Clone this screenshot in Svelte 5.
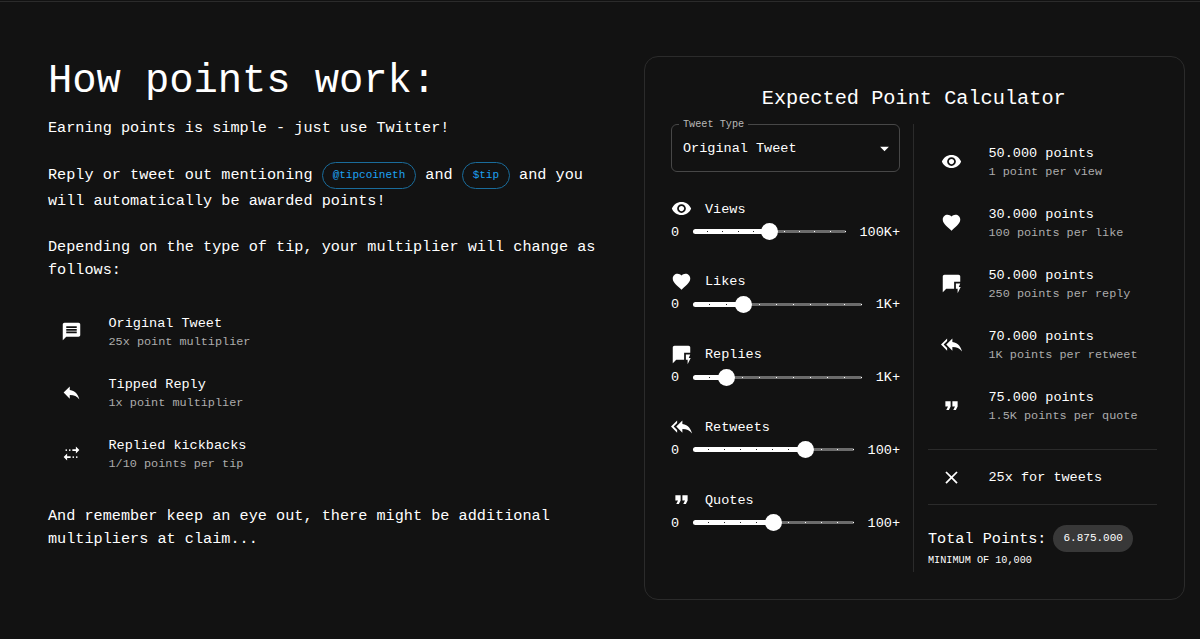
<script>
	const icons = {
		message: 'M20 2H4c-1.1 0-1.99.9-1.99 2L2 22l4-4h14c1.1 0 2-.9 2-2V4c0-1.1-.9-2-2-2zm-2 12H6v-2h12v2zm0-3H6V9h12v2zm0-3H6V6h12v2z',
		reply: 'M10 9V5l-7 7 7 7v-4.1c5 0 8.5 1.6 11 5.1-1-5-4-10-11-11z',
		replyAll: 'M7 8V5l-7 7 7 7v-3l-4-4 4-4V8zm6 1V5l-7 7 7 7v-4.1c5 0 8.5 1.6 11 5.1-1-5-4-10-11-11z',
		stop: 'M17 4l4 4-4 4V9h-4V7h4V4zM10 7a1 1 0 1 1 0 2 1 1 0 0 1 0-2zM6 7a1 1 0 1 1 0 2 1 1 0 0 1 0-2zM7 20l-4-4 4-4v3h4v2H7v3zM14 17a1 1 0 1 1 0-2 1 1 0 0 1 0 2zM18 17a1 1 0 1 1 0-2 1 1 0 0 1 0 2z',
		eye: 'M12 4.5C7 4.5 2.73 7.61 1 12c1.73 4.39 6 7.5 11 7.5s9.27-3.11 11-7.5c-1.73-4.39-6-7.5-11-7.5zM12 17c-2.76 0-5-2.24-5-5s2.24-5 5-5 5 2.24 5 5-2.24 5-5 5zm0-8c-1.66 0-3 1.34-3 3s1.34 3 3 3 3-1.34 3-3-1.34-3-3-3z',
		heart: 'M12 21.35l-1.45-1.32C5.4 15.36 2 12.28 2 8.5 2 5.42 4.42 3 7.5 3c1.74 0 3.41.81 4.5 2.09C13.09 3.81 14.76 3 16.5 3 19.58 3 22 5.42 22 8.5c0 3.78-3.4 6.86-8.55 11.54L12 21.35z',
		quick: 'M22 4c0-1.1-.9-2-2-2H4c-1.1 0-1.99.9-1.99 2L2 22l4-4h9v-8h7V4zM22.5 16h-2.2l1.7-4h-5v6h2v5l3.5-7z',
		quote: 'M6 17h3l2-4V7H5v6h3l-2 4zm8 0h3l2-4V7h-6v6h3l-2 4z',
		close: 'M19 6.41L17.59 5 12 10.59 6.41 5 5 6.41 10.59 12 5 17.59 6.41 19 12 13.41 17.59 19 19 17.59 13.41 12 19 6.41z'
	};

	const multipliers = [
		{ icon: 'message', title: 'Original Tweet', sub: '25x point multiplier' },
		{ icon: 'reply', title: 'Tipped Reply', sub: '1x point multiplier' },
		{ icon: 'stop', title: 'Replied kickbacks', sub: '1/10 points per tip' }
	];

	let sliders = [
		{ icon: 'eye', name: 'Views', value: 50, max: '100K+' },
		{ icon: 'heart', name: 'Likes', value: 30, max: '1K+' },
		{ icon: 'quick', name: 'Replies', value: 20, max: '1K+' },
		{ icon: 'replyAll', name: 'Retweets', value: 70, max: '100+' },
		{ icon: 'quote', name: 'Quotes', value: 50, max: '100+' }
	];

	const results = [
		{ icon: 'eye', title: '50.000 points', sub: '1 point per view' },
		{ icon: 'heart', title: '30.000 points', sub: '100 points per like' },
		{ icon: 'quick', title: '50.000 points', sub: '250 points per reply' },
		{ icon: 'replyAll', title: '70.000 points', sub: '1K points per retweet' },
		{ icon: 'quote', title: '75.000 points', sub: '1.5K points per quote' }
	];

	const marks = [10, 20, 30, 40, 50, 60, 70, 80, 90, 100];
</script>

{#snippet icon(name)}
	<svg class="icon" viewBox="0 0 24 24"><path d={icons[name]} /></svg>
{/snippet}

{#snippet row(item)}
	<li>
		{@render icon(item.icon)}
		<div>
			<p class="primary">{item.title}</p>
			<p class="secondary">{item.sub}</p>
		</div>
	</li>
{/snippet}

<main>
	<section class="info">
		<h1>How points work:</h1>
		<p>Earning points is simple - just use Twitter!</p>
		<p class="mention">
			Reply or tweet out mentioning <span class="chip">@tipcoineth</span> and <span class="chip">$tip</span> and you<br />
			will automatically be awarded points!
		</p>
		<p>Depending on the type of tip, your multiplier will change as follows:</p>
		<ul>
			{#each multipliers as item}
				{@render row(item)}
			{/each}
		</ul>
		<p>And remember keep an eye out, there might be additional multipliers at claim...</p>
	</section>

	<section class="card">
		<h2>Expected Point Calculator</h2>
		<div class="columns">
			<div class="inputs">
				<fieldset>
					<legend>Tweet Type</legend>
					<span>Original Tweet</span>
					<svg class="icon" viewBox="0 0 24 24"><path d="M7 10l5 5 5-5z" /></svg>
				</fieldset>
				{#each sliders as s}
					<div class="field">
						<div class="name">{@render icon(s.icon)}<span>{s.name}</span></div>
						<div class="range">
							<span>0</span>
							<div class="slider">
								<div class="track" style="width: {s.value}%"></div>
								{#each marks as m}
									<i class:active={m <= s.value} style="left: {m}%"></i>
								{/each}
								<div class="thumb" style="left: {s.value}%"></div>
							</div>
							<span>{s.max}</span>
						</div>
					</div>
				{/each}
			</div>

			<div class="results">
				<ul>
					{#each results as item}
						{@render row(item)}
					{/each}
				</ul>
				<div class="times">
					{@render icon('close')}
					<p class="primary">25x for tweets</p>
				</div>
				<div class="total"><span>Total Points:</span><span class="badge">6.875.000</span></div>
				<p class="minimum">MINIMUM OF 10,000</p>
			</div>
		</div>
	</section>
</main>

<style>
	:global(body) {
		background: #121212;
	}

	main {
		box-sizing: border-box;
		width: 1200px;
		height: 639px;
		display: flex;
		align-items: flex-start;
		padding: 55px 15px 0 48px;
		border-top: 1px solid #121212;
		box-shadow: inset 0 1px #2b2b2b;
		color: #fff;
		font-family: 'Liberation Mono', monospace;
		overflow: hidden;
	}

	h1, h2, p, ul {
		margin: 0;
		padding: 0;
		font-weight: 400;
	}

	.icon {
		width: 21px;
		height: 21px;
		flex: none;
		fill: #fff;
	}

	.info {
		width: 550px;
		margin-right: 45.5px;
		padding-top: 1px;
	}

	h1 {
		font-size: 40.5px;
		line-height: 48px;
		letter-spacing: -0.05px;
		margin-bottom: 12px;
	}

	.info > p {
		font-size: 15.2px;
		line-height: 22.8px;
		letter-spacing: 0.01px;
		margin-bottom: 22px;
	}

	.info > .mention {
		line-height: 26px;
		margin: -1px 0 22px;
	}

	.chip {
		position: relative;
		top: 1px;
		display: inline-flex;
		align-items: center;
		box-sizing: border-box;
		height: 27px;
		padding: 0 9.9px;
		border: 1px solid #1a6c9b;
		border-radius: 14px;
		font-size: 11px;
		letter-spacing: 0;
		color: #1da1f2;
		vertical-align: middle;
	}

	li {
		display: flex;
		align-items: center;
		height: 61px;
		padding-left: 13px;
	}

	li > .icon {
		margin-bottom: 4px;
	}

	li > div {
		margin: 0 0 2px 26.5px;
	}

	.primary {
		font-size: 13.53px;
		line-height: 20px;
	}

	.secondary {
		font-size: 11.84px;
		line-height: 17px;
		color: #acacac;
	}

	.info ul {
		margin: 19px 0;
	}

	.card {
		box-sizing: border-box;
		width: 541px;
		height: 544px;
		border: 1px solid #2b2b2b;
		border-radius: 14px;
		padding: 28px 27px 0 26.5px;
	}

	h2 {
		font-size: 20.27px;
		line-height: 28px;
		text-align: center;
		margin-bottom: 11px;
	}

	.columns {
		display: flex;
	}

	.inputs {
		width: 229px;
		padding-right: 13px;
	}

	fieldset {
		box-sizing: border-box;
		display: flex;
		align-items: center;
		justify-content: space-between;
		width: 229px;
		height: 53px;
		margin: -5px 0 26px;
		padding: 0 4px 5px 11px;
		border: 1px solid #474747;
		border-radius: 6px;
		font-size: 13.53px;
	}

	legend {
		margin-left: -4px;
		padding: 1px 4px 0;
		font-size: 10.2px;
		line-height: 10px;
		color: #b8b8b8;
	}

	.field {
		height: 72.75px;
		font-size: 13.53px;
	}

	.name {
		display: flex;
		align-items: center;
		gap: 13px;
		height: 22px;
	}

	.name .icon {
		margin-bottom: 1px;
	}

	.range {
		display: flex;
		align-items: center;
		height: 24px;
	}

	.slider {
		position: relative;
		flex: 1;
		height: 3px;
		margin: 0 13.5px 1px 13.5px;
		border-radius: 2px;
		background: #6b6b6b;
	}

	.track {
		position: relative;
		top: -1px;
		height: 5px;
		border-radius: 3px;
		background: #fff;
	}

	i {
		position: absolute;
		top: 1px;
		width: 1px;
		height: 1px;
		margin-left: -1px;
		background: #fff;
	}

	i.active {
		background: #222;
	}

	.thumb {
		position: absolute;
		top: -7px;
		width: 17px;
		height: 17px;
		margin-left: -8.5px;
		border-radius: 50%;
		background: #fff;
	}

	.results {
		box-sizing: border-box;
		width: 244px;
		height: 448px;
		padding: 9px 0 0 14px;
		border-left: 1px solid #2b2b2b;
	}

	.times {
		display: flex;
		align-items: center;
		gap: 26.5px;
		height: 54px;
		margin-top: 11px;
		padding-left: 13px;
		border: solid #2b2b2b;
		border-width: 1px 0;
	}

	.times .primary {
		padding-top: 1px;
	}

	.total {
		display: flex;
		align-items: center;
		margin-top: 20px;
		font-size: 15.2px;
	}

	.badge {
		height: 27px;
		margin-left: 7px;
		padding: 0 10px;
		border-radius: 14px;
		background: #383838;
		font-size: 11px;
		line-height: 27px;
	}

	.minimum {
		font-size: 10.2px;
		line-height: 17px;
	}
</style>
